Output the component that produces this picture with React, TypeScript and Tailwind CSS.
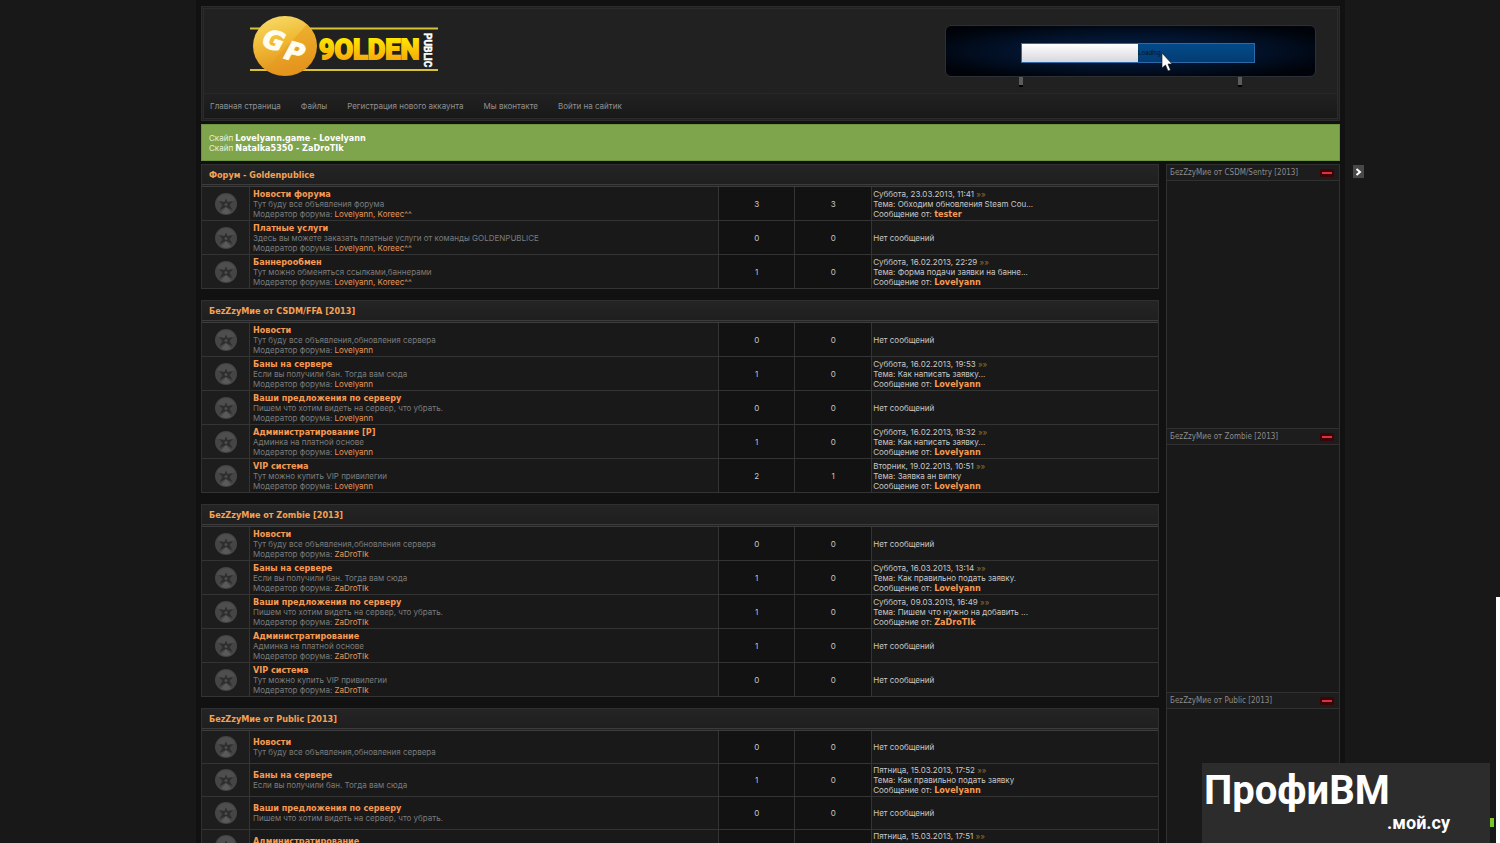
type Forum = {
  title: string;
  text: string;
  mods?: string[];
  topics: number;
  replies: number;
  last?: { date: string; topic: string; author: string };
};

type Category = { name: string; compact?: boolean; forums: Forum[] };

const NEWS = "Тут буду все объявления,обновления сервера";
const BANS = "Если вы получили бан. Тогда вам сюда";
const IDEAS = "Пишем что хотим видеть на сервер, что убрать.";
const ADMIN = "Админка на платной основе";
const VIP = "Тут можно купить VIP привилегии";

const categories: Category[] = [
  {
    name: "Форум - Goldenpublice",
    forums: [
      { title: "Новости форума", text: "Тут буду все объявления форума", mods: ["Lovelyann", "Koreec^^"], topics: 3, replies: 3, last: { date: "Суббота, 23.03.2013, 11:41", topic: "Обходим обновления Steam Cou...", author: "tester" } },
      { title: "Платные услуги", text: "Здесь вы можете заказать платные услуги от команды GOLDENPUBLICE", mods: ["Lovelyann", "Koreec^^"], topics: 0, replies: 0 },
      { title: "Баннерообмен", text: "Тут можно обменяться ссылками,баннерами", mods: ["Lovelyann", "Koreec^^"], topics: 1, replies: 0, last: { date: "Суббота, 16.02.2013, 22:29", topic: "Форма подачи заявки на банне...", author: "Lovelyann" } },
    ],
  },
  {
    name: "БеzZzyМие от CSDM/FFA [2013]",
    forums: [
      { title: "Новости", text: NEWS, mods: ["Lovelyann"], topics: 0, replies: 0 },
      { title: "Баны на сервере", text: BANS, mods: ["Lovelyann"], topics: 1, replies: 0, last: { date: "Суббота, 16.02.2013, 19:53", topic: "Как написать заявку...", author: "Lovelyann" } },
      { title: "Ваши предложения по серверу", text: IDEAS, mods: ["Lovelyann"], topics: 0, replies: 0 },
      { title: "Администратирование [P]", text: ADMIN, mods: ["Lovelyann"], topics: 1, replies: 0, last: { date: "Суббота, 16.02.2013, 18:32", topic: "Как написать заявку...", author: "Lovelyann" } },
      { title: "VIP система", text: VIP, mods: ["Lovelyann"], topics: 2, replies: 1, last: { date: "Вторник, 19.02.2013, 10:51", topic: "Заявка ан випку", author: "Lovelyann" } },
    ],
  },
  {
    name: "БеzZzyМие от Zombie [2013]",
    forums: [
      { title: "Новости", text: NEWS, mods: ["ZaDroTIk"], topics: 0, replies: 0 },
      { title: "Баны на сервере", text: BANS, mods: ["ZaDroTIk"], topics: 1, replies: 0, last: { date: "Суббота, 16.03.2013, 13:14", topic: "Как правильно подать заявку.", author: "Lovelyann" } },
      { title: "Ваши предложения по серверу", text: IDEAS, mods: ["ZaDroTIk"], topics: 1, replies: 0, last: { date: "Суббота, 09.03.2013, 16:49", topic: "Пишем что нужно на добавить ...", author: "ZaDroTIk" } },
      { title: "Администратирование", text: ADMIN, mods: ["ZaDroTIk"], topics: 1, replies: 0 },
      { title: "VIP система", text: VIP, mods: ["ZaDroTIk"], topics: 0, replies: 0 },
    ],
  },
  {
    name: "БеzZzyМие от Public [2013]",
    compact: true,
    forums: [
      { title: "Новости", text: NEWS, topics: 0, replies: 0 },
      { title: "Баны на сервере", text: BANS, topics: 1, replies: 0, last: { date: "Пятница, 15.03.2013, 17:52", topic: "Как правильно подать заявку", author: "Lovelyann" } },
      { title: "Ваши предложения по серверу", text: IDEAS, topics: 0, replies: 0 },
      { title: "Администратирование", text: ADMIN, topics: 1, replies: 0, last: { date: "Пятница, 15.03.2013, 17:51", topic: "Как написать заявку", author: "Lovelyann" } },
    ],
  },
];

const menu = ["Главная страница", "Файлы", "Регистрация нового аккаунта", "Мы вконтакте", "Войти на сайтик"];
const servers = ["БеzZzyМие от CSDM/Sentry [2013]", "БеzZzyМие от Zombie [2013]", "БеzZzyМие от Public [2013]"];

// headings and nicknames
const STRONG = "font-['DejaVu_Sans_Condensed','DejaVu_Sans',sans-serif] text-[9px] leading-[10px] font-bold";

function Logo() {
  return (
    <svg width="190" height="64" viewBox="0 0 190 64" role="img" aria-label="Golden Public">
      <defs>
        <linearGradient id="coin" x1="0" y1="0" x2="0.3" y2="1">
          <stop offset="0" stopColor="#f8df70" />
          <stop offset="0.5" stopColor="#f0ba34" />
          <stop offset="1" stopColor="#e0901e" />
        </linearGradient>
        <linearGradient id="gold" x1="0" y1="0" x2="0" y2="1">
          <stop offset="0" stopColor="#fff200" />
          <stop offset="1" stopColor="#f59a0c" />
        </linearGradient>
      </defs>
      <path d="M0 13.5H188M0 55H188" stroke="#d8c23a" strokeWidth="2" />
      <ellipse cx="35" cy="31" rx="32" ry="30" fill="url(#coin)" />
      <path d="M57 9.500A32 30 0 0 1 15 54.500Z" fill="#e89a1e" opacity="0.5" />
      <g fill="#fffdf0" stroke="#fffdf0" fontFamily="DejaVu Sans" fontWeight="700" fontStyle="italic" fontSize="26">
        <text transform="translate(11 31) rotate(17)">G</text>
        <text transform="translate(33 43) rotate(17)">P</text>
      </g>
      <text x="69" y="44" fill="url(#gold)" stroke="url(#gold)" strokeWidth="2" fontFamily="Roboto" fontWeight="700" fontSize="27">9OLDEN</text>
      <text transform="translate(174 18) rotate(90)" fill="#fff" stroke="#fff" strokeWidth="0.5" fontFamily="Roboto" fontWeight="700" fontSize="10">PUBLIC</text>
    </svg>
  );
}

function WheelIcon() {
  return (
    <svg className="mx-auto block" width="24" height="24" viewBox="0 0 24 24" aria-hidden="true">
      <circle cx="12" cy="12" r="11" fill="#454545" />
      <path d="M3 8A10 10 0 0 1 21 8L12 12Z" fill="#4e4e4e" />
      <path d="M12 6.500l1.500 3.500 5.500-1-3.500 4 3 5-6.500-3-6.500 3 3-5L5 9l5.500 1z" fill="#2e2e2e" />
      <path d="M12 15l5 5.500a10 10 0 0 1-10 0z" fill="#5a5a5a" />
      <circle cx="12" cy="12.500" r="1.500" fill="#4c4c4c" />
    </svg>
  );
}

function Billboard() {
  return (
    <div className="w-[371px]">
      <div className="h-[52px] rounded-md border border-[#2c2f33] bg-[radial-gradient(ellipse_at_center,#03204a_0%,#021128_50%,#000309_85%)] pt-[17px] pl-[75px]">
        <div className="relative h-5 w-[234px] border border-[#2e6aa5] bg-linear-to-b from-[#034a8a] to-[#043c72]">
          <div className="h-full w-1/2 bg-linear-to-b from-white to-[#d6d6de]" />
          <span className="absolute top-1 left-1/2 text-[6px] text-[#06101f]">Loading...</span>
          <svg className="absolute top-2 left-[139px]" width="12" height="20" viewBox="0 0 12 20" aria-hidden="true">
            <path d="M1 1v15l3.500-3 2.500 6 2.500-1-2.500-6H11z" fill="#fff" stroke="#111" strokeWidth="0.6" />
          </svg>
        </div>
      </div>
      <div className="flex justify-between px-[74px]">
        <span className="h-[10px] w-1 border-b-2 border-black bg-[#5c5c5c]" />
        <span className="h-[10px] w-1 border-b-2 border-black bg-[#5c5c5c]" />
      </div>
    </div>
  );
}

function ForumRow({ forum, compact }: { forum: Forum; compact?: boolean }) {
  return (
    <tr className={compact ? "h-[33px]" : "h-[34px]"}>
      <td className="border-b border-[#343434] bg-[#1d1d1d]"><WheelIcon /></td>
      <td className="border-b border-l border-[#343434] pl-[3px]">
        <a href="#" className={`block text-[#f79a52] ${STRONG}`}>{forum.title}</a>
        <p>{forum.text}</p>
        {forum.mods ? (
          <p>
            Модератор форума:{" "}
            {forum.mods.map((mod, i) => (
              <span key={mod} className="text-[#e9975a]">{i > 0 ? ", " : ""}<a href="#">{mod}</a></span>
            ))}
          </p>
        ) : null}
      </td>
      <td className="border-b border-l border-[#343434] bg-[#121212] text-center text-[#c8c8c8]">{forum.topics}</td>
      <td className="border-b border-l border-[#343434] bg-[#121212] text-center text-[#c8c8c8]">{forum.replies}</td>
      <td className="border-b border-l border-[#343434] pl-px text-[#c8c8c8]">
        {forum.last ? (
          <>
            <p>{forum.last.date} <a href="#" className="text-[#8a6a2c]">»»</a></p>
            <p>Тема: {forum.last.topic}</p>
            <p className="h-[10px]">Сообщение от: <a href="#" className={`text-[#f79a52] ${STRONG}`}>{forum.last.author}</a></p>
          </>
        ) : "Нет сообщений"}
      </td>
    </tr>
  );
}

function CategoryTable({ category }: { category: Category }) {
  return (
    <table className="w-full table-fixed border-separate border-spacing-0 border-x border-t border-[#303030] bg-[#191919]">
      <colgroup>
        <col className="w-[47px]" />
        <col />
        <col className="w-[76px]" />
        <col className="w-[77px]" />
        <col className="w-[30%]" />
      </colgroup>
      <thead>
        <tr>
          <th colSpan={5} className={`h-[22px] border-b-3 border-double border-[#3c3c3c] bg-linear-to-b from-[#242424] to-[#1f1f1f] pl-[7px] text-left text-[#f5a254] ${STRONG}`}>{category.name}</th>
        </tr>
      </thead>
      <tbody>
        {category.forums.map((forum) => <ForumRow key={forum.title} forum={forum} compact={category.compact} />)}
      </tbody>
    </table>
  );
}

export default function App() {
  return (
    <div className="relative h-screen overflow-hidden bg-[#181818] pr-[155px] pl-[196px] font-['Inter',sans-serif] text-[8px] leading-[10px] text-[#7c7c7c]">
      <div className="min-h-full bg-[#111] px-[5px] pt-[6px]">
        <header className="border-3 border-double border-[#2c2c2c] bg-[#212121]">
          <div className="flex h-[84px] items-start justify-between pr-[21px] pl-[46px]">
            <div className="pt-[6px]"><Logo /></div>
            <div className="pt-4"><Billboard /></div>
          </div>
          <nav className="flex h-[25px] items-center gap-5 border-t border-[#282828] bg-linear-to-b from-[#212121] to-[#191919] pl-[6px] text-[#919191]">
            {menu.map((item) => <a key={item} href="#">{item}</a>)}
          </nav>
        </header>

        <div className="mt-[3px] border border-[#6f9440] bg-[#7ea54c] px-[7px] pt-2 pb-[7px] text-[#e8f0dc]">
          <p className="h-[10px]">Скайп <b className={`text-white ${STRONG}`}>Lovelyann.game - Lovelyann</b></p>
          <p className="h-[10px]">Скайп <b className={`text-white ${STRONG}`}>Natalka5350 - ZaDroTIk</b></p>
        </div>

        <div className="mt-[3px] flex gap-[7px]">
          <main className="flex min-w-0 flex-1 flex-col gap-[11px]">
            {categories.map((category) => <CategoryTable key={category.name} category={category} />)}
          </main>
          <aside className="w-[174px] shrink-0 border-x border-[#303030] bg-[#191919]">
            {servers.map((server) => (
              <section key={server}>
                <h2 className="flex h-[17px] items-center justify-between border-y border-[#303030] bg-[#1d1d1d] pr-[5px] pl-[3px] font-['DejaVu_Sans_Condensed','DejaVu_Sans',sans-serif] text-[8px] text-[#8c8c8c]">
                  {server}
                  <button type="button" aria-label="Свернуть" className="flex h-2 w-[14px] items-center justify-center rounded-xs bg-[#3d0308]">
                    <span className="h-[2px] w-[10px] bg-[#d8323c]" />
                  </button>
                </h2>
                <div className="h-[247px]" />
              </section>
            ))}
          </aside>
        </div>
      </div>

      <button type="button" aria-label="Открыть панель" className="absolute top-[165px] right-[136px] flex h-[13px] w-[11px] items-center justify-center bg-[#484848]">
        <svg width="7" height="8" viewBox="0 0 7 8" aria-hidden="true"><path d="M1.500 1 5 4 1.500 7" fill="none" stroke="#fff" strokeWidth="2" /></svg>
      </button>

      <div className="absolute right-0 bottom-0 h-[246px] w-1 bg-white" />
      <div className="absolute right-[6px] bottom-4 h-[9px] w-1 bg-[#7cc22c]" />
      <div className="absolute right-[10px] bottom-0 h-20 w-[288px] bg-[#2c2c2c] pt-2 pl-[2px] font-['Comic_Sans_MS','Roboto',sans-serif] font-bold text-white">
        <p className="text-[40px] leading-10">ПрофиВМ</p>
        <p className="pr-10 text-right text-lg leading-6">.мой.су</p>
      </div>
    </div>
  );
}
